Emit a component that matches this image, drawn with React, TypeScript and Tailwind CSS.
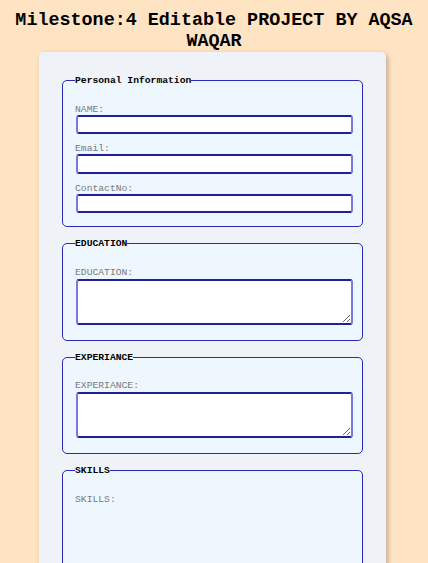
import React from "react";

const mono = { fontFamily: '"Liberation Mono", "Courier New", monospace' };

function Field({ label, area, skills }: { label: string; area?: boolean; skills?: boolean }) {
  return (
    <div className="flex flex-col">
      <label className="mt-[2px] block text-[9.7px] leading-[11px] text-[#7a7a7a]">{label}</label>
      {area ? (
        <textarea
          className={`${skills ? "mt-[80px]" : "mt-[1px]"} mb-[2px] ml-[1px] block h-[46px] w-[calc(100%+2px)] rounded-[3px] border-2 border-y-[#20209a] border-x-[#7878e4] bg-white`}
        />
      ) : (
        <input className="ml-[1px] block h-[19.5px] w-[calc(100%+2px)] rounded-[3px] border-2 border-y-[#20209a] border-x-[#7878e4] bg-white" />
      )}
    </div>
  );
}

function Section({ title, children, last }: { title: string; children: React.ReactNode; last?: boolean }) {
  return (
    <fieldset
      className={`rounded-[5px] border-[1.5px] border-[#2a2ab8] bg-[#eef6fe] px-[12px] pt-[15.5px] pb-[13px] ${last ? "" : "mb-[11px]"}`}
    >
      <legend className="p-0 text-[9.7px] leading-[11px] font-bold text-black">{title}</legend>
      <div className="flex flex-col gap-[7px]">{children}</div>
    </fieldset>
  );
}

export default function App() {
  return (
    <div className="min-h-[563px] bg-[#ffe4c4] pt-[10px] pb-[20px]" style={mono}>
      <h1 className="text-center text-[18.4px] leading-[21px] font-bold text-black px-2">
        Milestone:4 Editable PROJECT BY AQSA WAQAR
      </h1>
      <div className="ml-[39px] w-[347px] rounded-[5px] bg-[#eff3f8] p-[23px] shadow-[2px_2px_5px_rgba(0,0,0,0.25)]">
        <Section title="Personal Information">
          <Field label="NAME:" />
          <Field label="Email:" />
          <Field label="ContactNo:" />
        </Section>
        <Section title="EDUCATION">
          <Field label="EDUCATION:" area />
        </Section>
        <Section title="EXPERIANCE">
          <Field label="EXPERIANCE:" area />
        </Section>
        <Section title="SKILLS" last>
          <Field label="SKILLS:" area skills />
        </Section>
      </div>
    </div>
  );
}
